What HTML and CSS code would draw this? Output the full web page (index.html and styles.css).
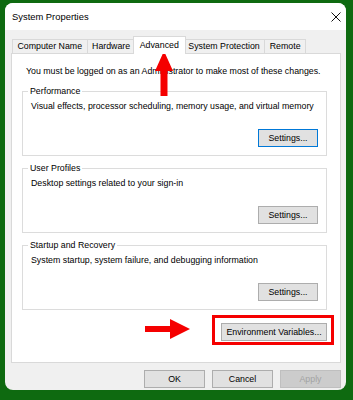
FILE: index.html
```html
<!DOCTYPE html>
<html>
<head>
<meta charset="utf-8">
<title>System Properties</title>
<link rel="stylesheet" href="styles.css">
</head>
<body>
<div class="window">
  <div class="titlebar">
    <span class="title">System Properties</span>
    <svg class="close" width="10" height="10" viewBox="0 0 10 10"><path d="M0.5 0.5L9.5 9.5M9.5 0.5L0.5 9.5" stroke="#111" stroke-width="1" fill="none"/></svg>
  </div>
  <div class="body">
    <div class="tabs">
      <div class="tab">Computer Name</div>
      <div class="tab">Hardware</div>
      <div class="tab active">Advanced</div>
      <div class="tab">System Protection</div>
      <div class="tab">Remote</div>
    </div>
    <div class="panel">
      <p class="note">You must be logged on as an Administrator to make most of these changes.</p>
      <div class="group">
        <span class="legend">Performance</span>
        <p class="desc">Visual effects, processor scheduling, memory usage, and virtual memory</p>
        <div class="actions"><button class="btn focus">Settings...</button></div>
      </div>
      <div class="group">
        <span class="legend">User Profiles</span>
        <p class="desc">Desktop settings related to your sign-in</p>
        <div class="actions"><button class="btn">Settings...</button></div>
      </div>
      <div class="group">
        <span class="legend">Startup and Recovery</span>
        <p class="desc">System startup, system failure, and debugging information</p>
        <div class="actions"><button class="btn">Settings...</button></div>
      </div>
      <div class="env-row">
        <svg class="arrow-right" width="45" height="20" viewBox="0 0 45 20"><polygon points="0,7 25,7 25,0 45,10 25,20 25,13 0,13" fill="#f50000"/></svg>
        <span class="highlight"><button class="btn env-btn">Environment Variables...</button></span>
      </div>
    </div>
    <div class="footer">
      <button class="btn">OK</button>
      <button class="btn">Cancel</button>
      <button class="btn" disabled>Apply</button>
    </div>
  </div>
  <svg class="arrow-up" width="18" height="45" viewBox="0 0 18 45"><polygon points="9,0 18,20 12.5,20 12.5,45 5.5,45 5.5,20 0,20" fill="#f50000"/></svg>
</div>
</body>
</html>
```
FILE: styles.css
```css
html, body {
  margin: 0;
  padding: 0;
}
body {
  width: 353px;
  height: 400px;
  overflow: hidden;
  background: #0e6a10;
  font-family: "Liberation Sans", Arial, sans-serif;
  font-size: 8.8px;
  color: #000;
}
.window {
  position: relative;
  margin: 3px 7px 0 5px;
  height: 387px;
  background: #f0f0f0;
  border-radius: 8px;
  overflow: hidden;
}
.titlebar {
  height: 27px;
  background: #fff;
  display: flex;
  align-items: center;
  justify-content: space-between;
  padding: 0 5px 0 7px;
}
.title {
  font-size: 9.4px;
}
.close {
  display: block;
}
.body {
  padding: 6px 5px 0 6px;
}
.tabs {
  display: flex;
  align-items: flex-end;
  height: 17px;
  padding-left: 2px;
}
.tab {
  box-sizing: border-box;
  height: 14px;
  line-height: 13px;
  padding: 0 4.5px;
  margin-left: -1px;
  border: 1px solid #d9d9d9;
  border-bottom: none;
  background: #f0f0f0;
  white-space: nowrap;
}
.tab.active {
  position: relative;
  z-index: 1;
  height: 18px;
  line-height: 16px;
  padding: 0 6px;
  margin: 0 -2px -1px -3px;
  background: #fff;
}
.panel {
  box-sizing: border-box;
  height: 310px;
  border: 1px solid #d9d9d9;
  background: #fff;
  padding: 11px 13px 0 10px;
}
.note {
  margin: 0 0 14px 4px;
  line-height: 12px;
}
.group {
  position: relative;
  box-sizing: border-box;
  height: 65px;
  border: 1px solid #dcdcdc;
  padding: 8px;
  margin-bottom: 12px;
  display: flex;
  flex-direction: column;
}
.legend {
  position: absolute;
  top: -7px;
  left: 5px;
  padding: 0 2px;
  background: #fff;
  line-height: 12px;
}
.desc {
  margin: 0;
  line-height: 12px;
}
.actions {
  margin-top: auto;
  display: flex;
  justify-content: flex-end;
}
.btn {
  box-sizing: border-box;
  font: inherit;
  height: 18px;
  min-width: 60px;
  padding: 0 4px;
  line-height: 16px;
  white-space: nowrap;
  background: #e1e1e1;
  border: 1px solid #adadad;
  color: #000;
  border-radius: 0;
}
.btn.focus {
  border-color: #0078d7;
}
.btn:disabled {
  color: #a3a3a3;
  background: #cccccc;
  border-color: #bfbfbf;
}
.env-row {
  display: flex;
  justify-content: flex-end;
  align-items: flex-start;
  margin-top: 13px;
}
.arrow-right {
  display: block;
  margin: -4px 31px 0 0;
}
.highlight {
  position: relative;
  display: flex;
}
.highlight::after {
  content: "";
  position: absolute;
  top: -8px;
  bottom: -4px;
  left: -9px;
  right: -7px;
  border: 3px solid #f50000;
  pointer-events: none;
}
.env-btn {
  width: 106px;
}
.footer {
  display: flex;
  justify-content: flex-end;
  gap: 7px;
  margin-top: 7px;
}
.footer .btn {
  width: 61px;
}
.arrow-up {
  position: absolute;
  left: 150px;
  top: 48px;
}
```
